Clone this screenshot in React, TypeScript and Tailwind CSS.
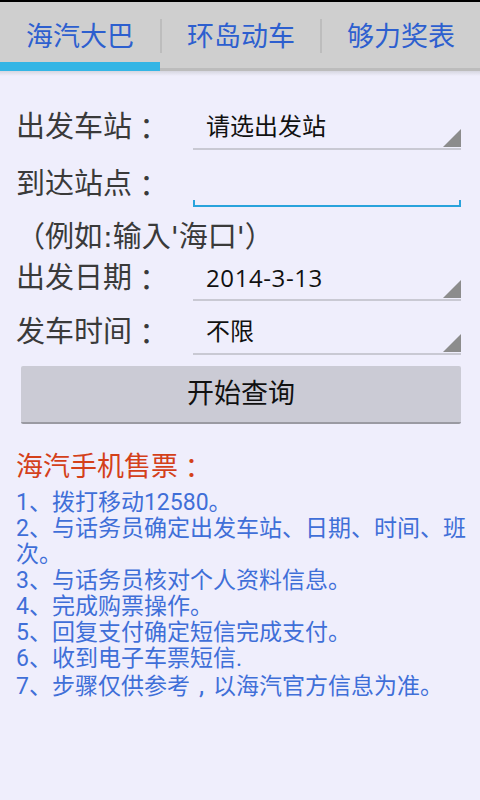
import React from "react";

const FONT = { fontFamily: 'Roboto, "Noto Sans CJK SC", sans-serif' };
const TC = { fontFamily: '"Noto Sans CJK TC", sans-serif' };

function Tab({ label, active, divider }: { label: string; active?: boolean; divider?: boolean }) {
  return (
    <div className="flex w-[160px] flex-col">
      <div className="flex flex-1 items-start">
        {divider ? <div className="mt-[17px] h-[34px] w-[2px] bg-[#bdbdbd]" /> : null}
        <div className="flex-1 pt-[19px] text-center text-[27px] leading-[32px] text-[#2d5fcf]">{label}</div>
      </div>
      {active ? <div className="h-[9px] bg-[#33b5e5]" /> : <div className="h-[3px] bg-[#bcbcbc]" />}
    </div>
  );
}

function Triangle() {
  return (
    <svg width="18" height="18" viewBox="0 0 18 18" className="mb-[1px] self-end">
      <polygon points="18,0 18,18 0,18" fill="#8c8c8c" />
    </svg>
  );
}

function Spinner({ value, digits }: { value: string; digits?: boolean }) {
  return (
    <div className="flex h-full w-[268px] items-stretch border-b-2 border-[#c9c9d3]">
      <div
        className={
          digits
            ? "flex flex-1 items-center pl-[13px] text-[24px] tracking-[0.6px] text-[#111]"
            : "flex flex-1 items-center pl-[13px] text-[24px] text-[#111]"
        }
        style={digits ? { fontFamily: '"Open Sans", Roboto, sans-serif' } : undefined}
      >
        {value}
      </div>
      <Triangle />
    </div>
  );
}

function Label({ text }: { text: string }) {
  return (
    <div className="flex w-[193px] items-center pl-[16px] text-[29px] text-[#3a3a3a]">
      {text}
      <span style={TC}>：</span>
    </div>
  );
}

export default function App() {
  return (
    <div className="h-[800px] w-[480px] overflow-hidden bg-[#efeefc]" style={FONT}>
      <div className="h-[2px] bg-black" />
      <div className="flex h-[69px] bg-[#cfcfcf]">
        <Tab label="海汽大巴" active />
        <Tab label="环岛动车" divider />
        <Tab label="够力奖表" divider />
      </div>
      <div className="h-[5px] bg-gradient-to-b from-[#d6d6e0] to-[#efeefc]" />

      <div className="flex flex-col pt-[26px]">
        <div className="flex h-[48px] pt-[4px]">
          <Label text="出发车站" />
          <Spinner value="请选出发站" />
        </div>
        <div className="mt-[7px] flex h-[50px] pt-[6px]">
          <Label text="到达站点" />
          <div className="flex w-[268px] flex-col justify-end">
            <div className="h-[7px] border-x-2 border-b-2 border-[#29a3dc]" />
          </div>
        </div>
        <div
          className="mt-[15px] h-[30px] pl-[16px] text-[29px] leading-[30px] text-[#3a3a3a]"
          style={{ fontFamily: '"DejaVu Sans", "Noto Sans CJK TC", sans-serif' }}
        >
          （例如:输入'海口'）
        </div>
        <div className="mt-[1px] flex h-[48px] pt-[4px]">
          <Label text="出发日期" />
          <Spinner value="2014-3-13" digits />
        </div>
        <div className="mt-[6px] flex h-[48px] pt-[4px]">
          <Label text="发车时间" />
          <Spinner value="不限" />
        </div>
        <div className="ml-[21px] mt-[11px] flex h-[58px] w-[440px] items-center justify-center rounded-[2px] border-b-2 border-[#9a9aa2] bg-[#cbcbd5] text-[27px] text-[#111]">
          开始查询
        </div>
        <div className="mt-[27px] flex h-[32px] items-center pl-[16px] text-[27px] text-[#d4401a]">
          海汽手机售票<span style={TC}>：</span>
        </div>
        <div className="mt-[7px] pl-[16px] pr-[4px] text-[23px] leading-[26px] text-[#3f6fd8]">
          <div>1、拨打移动12580。</div>
          <div>2、与话务员确定出发车站、日期、时间、班次。</div>
          <div>3、与话务员核对个人资料信息。</div>
          <div>4、完成购票操作。</div>
          <div>5、回复支付确定短信完成支付。</div>
          <div>6、收到电子车票短信.</div>
          <div>
            7、步骤仅供参考<span className="inline-block w-[23px] text-center text-[26px]">,</span>以海汽官方信息为准。
          </div>
        </div>
      </div>
    </div>
  );
}
